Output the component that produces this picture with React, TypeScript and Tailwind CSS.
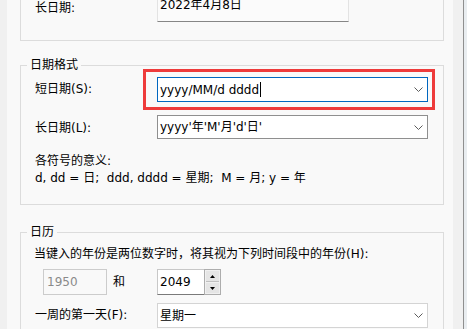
import React from "react";

function Chevron() {
  return (
    <svg width="9" height="5" viewBox="0 0 9 5" className="shrink-0">
      <polyline points="0.5,0.5 4.5,4.5 8.5,0.5" fill="none" stroke="#5c5c5c" strokeWidth="1" />
    </svg>
  );
}

export default function App() {
  return (
    <div className="w-[467px] h-[329px] overflow-hidden flex bg-[#f0f0f0] text-[12px] text-black font-['DejaVu_Sans','Noto_Sans_CJK_SC',sans-serif]">
      <div className="w-[7px] shrink-0" />
      <div className="w-[446px] shrink-0 bg-[#f9f9f9] pl-[13px] pr-[9px] flex flex-col">
        {/* Group 1 (top cut off) */}
        <div className="h-[41px] shrink-0 border-x border-b border-[#dcdcdc] flex items-start pl-[14px]">
          <div className="w-[122px] leading-[16px]">长日期:</div>
          <div className="w-[192px] h-[27px] -mt-[5px] bg-[#fbfbfb] border-x border-[#e3e3e3] border-b border-b-[#868686] pl-[2px] pt-[2px] leading-[16px]">
            2022年4月8日
          </div>
        </div>

        {/* Group 2 */}
        <div className="relative mt-[24px] h-[140px] shrink-0 border border-[#dcdcdc] pl-[14px]">
          <div className="absolute -top-[9px] left-[6px] px-[3px] bg-[#f9f9f9] leading-[17px]">日期格式</div>
          <div className="flex items-start mt-[11px]">
            <div className="w-[122px] leading-[16px] mt-[4px]">短日期(S):</div>
            <div className="w-[271px] h-[25px] bg-white border border-[#0067c0] flex items-center justify-between pl-[2px] pr-[4px]">
              <div className="flex items-center leading-[16px]">
                <span>yyyy/MM/d dddd</span>
                <span className="w-px h-[15px] bg-black ml-px" />
              </div>
              <Chevron />
            </div>
          </div>
          <div className="flex items-start mt-[13px]">
            <div className="w-[122px] leading-[16px] mt-[5px]">长日期(L):</div>
            <div className="w-[271px] h-[24px] bg-white border border-[#8f8f8f] flex items-center justify-between pl-[2px] pr-[4px]">
              <span className="leading-[16px]">yyyy'年'M'月'd'日'</span>
              <Chevron />
            </div>
          </div>
          <div className="mt-[14px] leading-[17px]">
            <div>各符号的意义:</div>
            <div className="whitespace-pre">d, dd = 日;  ddd, dddd = 星期;  M = 月; y = 年</div>
          </div>
          {/* red highlight annotation */}
          <div className="absolute top-[3px] left-[122px] w-[292px] h-[41px] border-[3px] border-[#ee3b3b] pointer-events-none" />
        </div>

        {/* Group 3 */}
        <div className="relative mt-[27px] flex-1 border-x border-t border-[#dcdcdc] pl-[14px]">
          <div className="absolute -top-[9px] left-[6px] px-[3px] bg-[#f9f9f9] leading-[17px]">日历</div>
          <div className="mt-[13px] leading-[16px] -ml-px">当键入的年份是两位数字时，将其视为下列时间段中的年份(H):</div>
          <div className="flex items-center mt-[7px]">
            <div className="w-[122px] flex items-center">
              <div className="ml-[8px] w-[64px] h-[26px] border border-[#cccccc] flex items-center pl-[3px] text-[#8a8a8a] leading-[16px]">1950</div>
              <div className="ml-[6px] leading-[16px]">和</div>
            </div>
            <div className="flex h-[26px]">
              <div className="w-[47px] h-[26px] bg-white border border-[#c8c8c8] border-b-[#7a7a7a] border-r-0 flex items-center pl-[2px] leading-[16px]">2049</div>
              <div className="w-[17px] h-[26px] border border-[#adadad] bg-[#f0f0f0] flex flex-col p-px gap-px">
                <div className="flex-1 bg-[#e5e5e5] border-b border-[#c0c0c0] flex items-center justify-center">
                  <svg width="5" height="3" viewBox="0 0 5 3"><polygon points="2.5,0 5,3 0,3" fill="#000" /></svg>
                </div>
                <div className="flex-1 bg-[#e5e5e5] flex items-center justify-center">
                  <svg width="5" height="3" viewBox="0 0 5 3"><polygon points="0,0 5,0 2.5,3" fill="#000" /></svg>
                </div>
              </div>
            </div>
          </div>
          <div className="flex items-start mt-[8px]">
            <div className="w-[122px] leading-[16px] mt-[4px]">一周的第一天(F):</div>
            <div className="w-[271px] h-[25px] bg-white border border-[#d4d4d4] flex items-center justify-between pl-[2px] pr-[4px]">
              <span className="leading-[16px]">星期一</span>
              <Chevron />
            </div>
          </div>
        </div>
      </div>
      <div className="w-[10px] shrink-0 bg-[#f0f0f0]" />
      <div className="w-px shrink-0 bg-[#8f8f8f]" />
      <div className="flex-1 bg-[#e9edf0]" />
    </div>
  );
}
